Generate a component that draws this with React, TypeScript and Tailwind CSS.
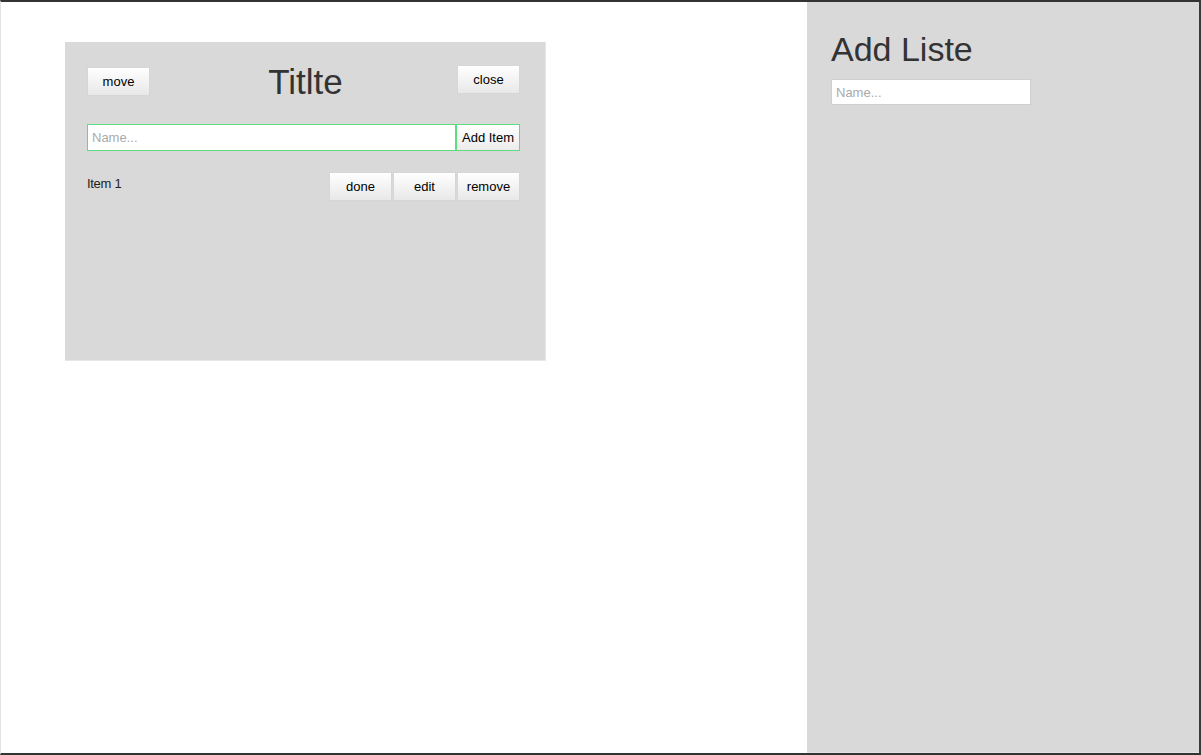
import { useState } from "react";

type Item = { id: number; name: string; done: boolean };

const btn =
  "h-[29px] w-[63px] border border-[#d6d6d6] bg-gradient-to-b from-white to-[#e8e8e8] text-[13px] text-black";

export default function App() {
  const [items] = useState<Item[]>([{ id: 1, name: "Item 1", done: false }]);

  return (
    <div
      className="flex h-[755px] w-[1201px] border-t-2 border-r-2 border-b-2 border-l border-t-[#333] border-r-[#3a3a3a] border-b-[#333] border-l-[#e3e3e3] bg-white"
      style={{ fontFamily: '"Liberation Sans", Arial, sans-serif' }}
    >
      {/* ---- Lists area ---- */}
      <main className="w-[806px] pl-[64px] pt-[40px]">
        <section className="h-[319px] w-[481px] border-r border-b border-[#e6e6e6] bg-[#d9d9d9] pl-[22px] pr-[25px]">
          <header className="flex items-start justify-between">
            <button className={`${btn} mt-[25px]`}>move</button>
            <h1 className="mt-[20px] ml-[4px] text-[35px] leading-[40px] text-[#333]">Titlte</h1>
            <button className={`${btn} mt-[23px]`}>close</button>
          </header>

          <form className="mt-[22px] flex" onSubmit={(e) => e.preventDefault()}>
            <input
              placeholder="Name..."
              className="h-[27px] w-[369px] border border-[#5ddc80] bg-white px-[4px] text-[13px] text-black outline-none placeholder:text-[#aaa]"
            />
            <button className="h-[27px] w-[64px] border border-[#5ddc80] bg-gradient-to-b from-white to-[#ececec] text-[13px] text-black">
              Add Item
            </button>
          </form>

          <ul className="mt-[21px]">
            {items.map((item) => (
              <li key={item.id} className="flex items-start justify-between">
                <span className="mt-[4px] text-[13px] leading-[15px] tracking-[-0.3px] text-[#222]">
                  {item.name}
                </span>
                <div className="flex gap-px">
                  <button className={btn}>done</button>
                  <button className={btn}>edit</button>
                  <button className={btn}>remove</button>
                </div>
              </li>
            ))}
          </ul>
        </section>
      </main>

      {/* ---- Sidebar ---- */}
      <aside className="w-[392px] border-b border-[#e4e4e4] bg-[#d9d9d9] pl-[24px] pt-[27px]">
        <h2 className="text-[34px] leading-[40px] text-[#333]">Add Liste</h2>
        <input
          placeholder="Name..."
          className="mt-[10px] h-[26px] w-[200px] border border-[#cfcfcf] bg-white px-[4px] text-[13px] text-black outline-none placeholder:text-[#aaa]"
        />
      </aside>
    </div>
  );
}
